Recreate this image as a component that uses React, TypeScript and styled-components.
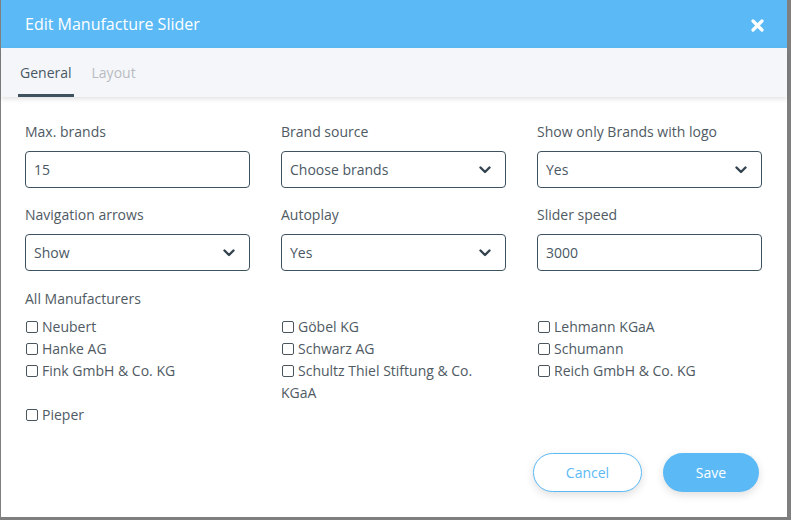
import React from 'react'
import styled, { createGlobalStyle } from 'styled-components'

const GlobalStyle = createGlobalStyle`
    body {
        margin: 0;
        background: #7f7f7f;
        font-family: "Open Sans", "Noto Sans", sans-serif;
    }
`

const manufacturers = [
    'Neubert', 'Göbel KG', 'Lehmann KGaA',
    'Hanke AG', 'Schwarz AG', 'Schumann',
    'Fink GmbH & Co. KG', 'Schultz Thiel Stiftung & Co. KGaA', 'Reich GmbH & Co. KG',
    'Pieper',
]

const Chevron: React.FC = () => (
    <svg width="12" height="8" viewBox="0 0 12 8">
        <path d="M1.5 1.5 L6 6 L10.5 1.5" fill="none" stroke="#34444f" strokeWidth="2.4" strokeLinecap="round" strokeLinejoin="round" />
    </svg>
)

const CloseIcon: React.FC = () => (
    <svg width="13" height="13" viewBox="0 0 13 13">
        <path d="M2 2 L11 11 M11 2 L2 11" fill="none" stroke="#ffffff" strokeWidth="3.2" strokeLinecap="round" />
    </svg>
)

const Select: React.FC<{ value: string }> = ({ value }) => (
    <Field>
        <span>{value}</span>
        <Chevron />
    </Field>
)

const App: React.FC = () => {
    return (
        <>
            <GlobalStyle />
            <Modal>
                <Header>
                    <Title>Edit Manufacture Slider</Title>
                    <Close><CloseIcon /></Close>
                </Header>
                <Tabs>
                    <Tab active>General</Tab>
                    <Tab>Layout</Tab>
                </Tabs>
                <Body>
                    <FormGrid>
                        <Group>
                            <Label>Max. brands</Label>
                            <Field><span>15</span></Field>
                        </Group>
                        <Group>
                            <Label>Brand source</Label>
                            <Select value="Choose brands" />
                        </Group>
                        <Group>
                            <Label>Show only Brands with logo</Label>
                            <Select value="Yes" />
                        </Group>
                        <Group>
                            <Label>Navigation arrows</Label>
                            <Select value="Show" />
                        </Group>
                        <Group>
                            <Label>Autoplay</Label>
                            <Select value="Yes" />
                        </Group>
                        <Group>
                            <Label>Slider speed</Label>
                            <Field><span>3000</span></Field>
                        </Group>
                    </FormGrid>
                    <SectionLabel>All Manufacturers</SectionLabel>
                    <CheckGrid>
                        {manufacturers.map((name) => (
                            <CheckItem key={name}>
                                <Box />{name}
                            </CheckItem>
                        ))}
                    </CheckGrid>
                </Body>
                <Footer>
                    <CancelButton>Cancel</CancelButton>
                    <SaveButton>Save</SaveButton>
                </Footer>
            </Modal>
        </>
    )
}

const Modal = styled.div`
    margin-left: 1px;
    width: 786px;
    height: 517px;
    background-color: #ffffff;
    display: flex;
    flex-direction: column;
`;

const Header = styled.div`
    height: 48px;
    background-color: #5bbaf5;
    display: flex;
    align-items: center;
    justify-content: space-between;
    padding: 0 23px 0 24px;
`;

const Title = styled.h1`
    margin: 0;
    font-size: 16px;
    font-weight: 400;
    color: #ffffff;
`;

const Close = styled.span`
    display: flex;
    margin-top: 2px;
`;

const Tabs = styled.div`
    height: 49px;
    background-color: #f5f6fa;
    display: flex;
    padding-left: 17px;
    gap: 16px;
    box-shadow: 0 2px 5px rgba(0, 0, 0, 0.12);
    position: relative;
`;

const Tab = styled.div<{ active?: boolean }>`
    display: flex;
    align-items: center;
    padding: 0 2px;
    font-size: 14px;
    color: ${(p) => (p.active ? '#4a5864' : '#b8bcc1')};
    border-bottom: 3px solid ${(p) => (p.active ? '#3f5260' : 'transparent')};
    padding-top: 2px;
`;

const Body = styled.div`
    padding: 25px 25px 0 24px;
    flex: 1;
`;

const FormGrid = styled.div`
    display: grid;
    grid-template-columns: repeat(3, 225px);
    column-gap: 31px;
    row-gap: 17px;
`;

const Group = styled.div`
    display: flex;
    flex-direction: column;
    gap: 9px;
`;

const Label = styled.label`
    font-size: 14px;
    line-height: 20px;
    color: #4f5a63;
`;

const Field = styled.div`
    height: 37px;
    box-sizing: border-box;
    border: 1px solid #3f5260;
    border-radius: 4px;
    display: flex;
    align-items: center;
    justify-content: space-between;
    padding: 0 14px 0 8px;
    font-size: 14px;
    color: #4a5864;
`;

const SectionLabel = styled.div`
    margin-top: 18px;
    font-size: 14px;
    line-height: 20px;
    color: #4f5a63;
`;

const CheckGrid = styled.div`
    margin-top: 7px;
    display: grid;
    grid-template-columns: repeat(3, 225px);
    column-gap: 31px;
`;

const CheckItem = styled.div`
    font-size: 14px;
    line-height: 22px;
    color: #4f5a63;
`;

const Box = styled.span`
    display: inline-block;
    width: 12px;
    height: 12px;
    box-sizing: border-box;
    border: 1.5px solid #4b555e;
    border-radius: 2px;
    margin: 0 4px 0 1px;
    vertical-align: -1px;
`;

const Footer = styled.div`
    display: flex;
    justify-content: flex-end;
    gap: 21px;
    padding: 0 28px 25px 0;
`;

const PillButton = styled.button`
    height: 39px;
    border-radius: 20px;
    font-family: "Open Sans", "Noto Sans", sans-serif;
    font-size: 14px;
    cursor: pointer;
    box-shadow: 0 3px 8px rgba(0, 0, 0, 0.13);
`;

const CancelButton = styled(PillButton)`
    width: 109px;
    background-color: #ffffff;
    border: 1px solid #5bbaf5;
    color: #5bbaf5;
`;

const SaveButton = styled(PillButton)`
    width: 96px;
    background-color: #5bbaf5;
    border: none;
    color: #ffffff;
`;

export default App
